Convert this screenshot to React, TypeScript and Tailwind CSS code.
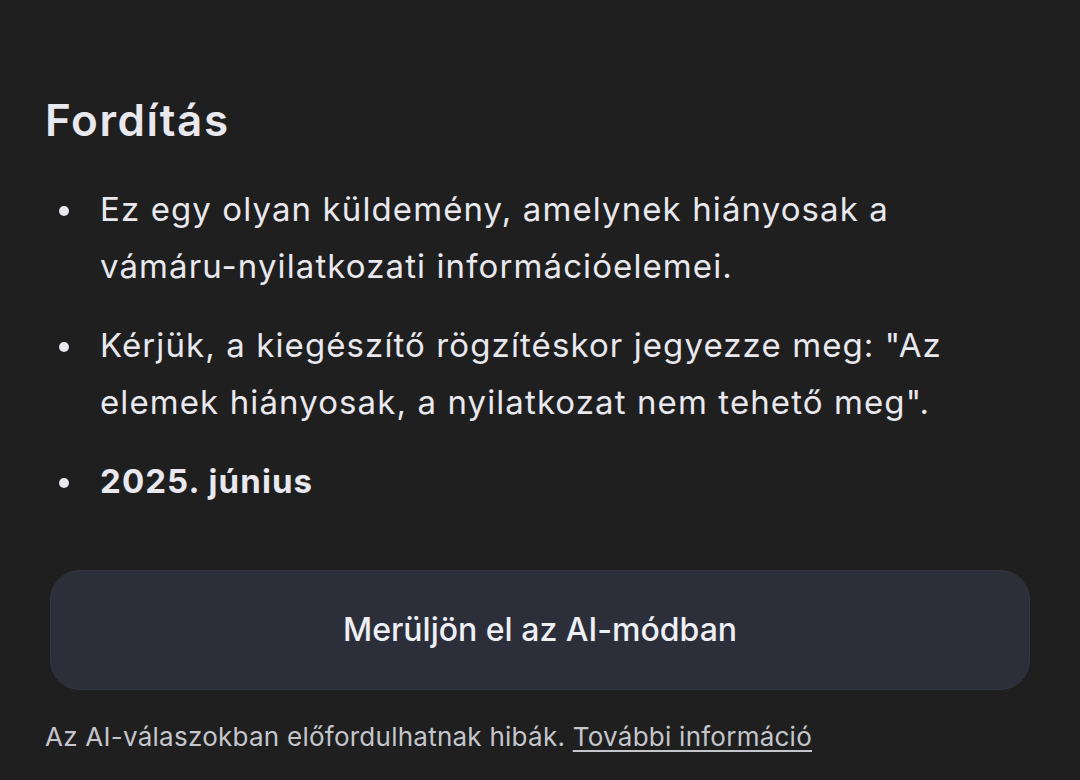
export default function App() {
  const font = { fontFamily: "Inter, 'Noto Sans', sans-serif" }
  return (
    <div className="min-h-[780px] w-[1080px] bg-[#1f1f1f] text-[#e8e8ee] pt-[92px] px-[45px]" style={font}>
      <h1 className="text-[44px] leading-[56px] font-semibold tracking-[1.6px]">Fordítás</h1>
      <ul className="mt-[33px] flex flex-col gap-[22px] pr-[40px] tracking-[1.1px]">
        <li className="flex text-[33px] leading-[57px]">
          <span className="w-[55px] shrink-0 flex justify-center pt-[25px]"><span className="block w-[10px] h-[10px] rounded-full bg-[#e8e8ee] -ml-[17px]" /></span>
          <span className="max-w-[850px]">Ez egy olyan küldemény, amelynek hiányosak a vámáru-nyilatkozati információelemei.</span>
        </li>
        <li className="flex text-[33px] leading-[57px]">
          <span className="w-[55px] shrink-0 flex justify-center pt-[25px]"><span className="block w-[10px] h-[10px] rounded-full bg-[#e8e8ee] -ml-[17px]" /></span>
          <span className="max-w-[850px]">Kérjük, a kiegészítő rögzítéskor jegyezze meg: "Az elemek hiányosak, a nyilatkozat nem tehető meg".</span>
        </li>
        <li className="flex text-[33px] leading-[57px]">
          <span className="w-[55px] shrink-0 flex justify-center pt-[25px]"><span className="block w-[10px] h-[10px] rounded-full bg-[#e8e8ee] -ml-[17px]" /></span>
          <span className="font-bold">2025. június</span>
        </li>
      </ul>
      <button className="mt-[60px] ml-[5px] w-[980px] h-[120px] rounded-[30px] bg-[#2c2f3a] border border-[#323541] text-[32px] font-medium text-[#eef0f6]">
        Merüljön el az AI-módban
      </button>
      <p className="mt-[30px] text-[26px] leading-[34px] text-[#c4c6cc] tracking-[0.25px]">
        Az AI-válaszokban előfordulhatnak hibák. <span className="underline underline-offset-4">További információ</span>
      </p>
    </div>
  )
}
